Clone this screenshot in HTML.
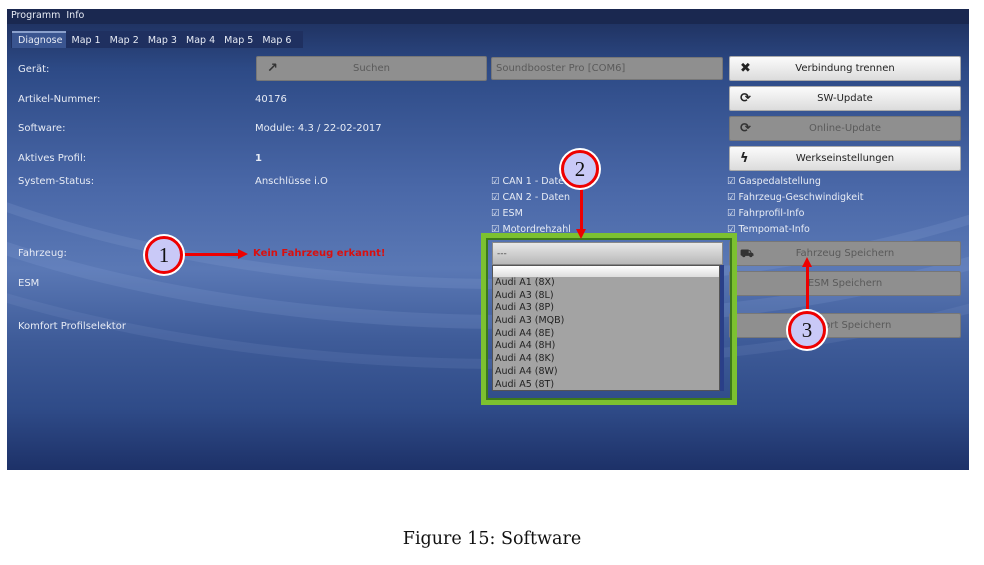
<!DOCTYPE html>
<html><head><meta charset="utf-8"><style>
*{margin:0;padding:0;box-sizing:border-box}
body{width:984px;height:565px;background:#fff;position:relative;font-family:"DejaVu Sans","Liberation Sans",sans-serif;overflow:hidden}
.win{position:absolute;left:7px;top:9px;width:962px;height:461px;background:linear-gradient(#1c2c58 0px,#2d4a86 60px,#4a68a8 180px,#5a78b5 260px,#3f5c99 330px,#2f4b88 400px,#1d3168 461px);overflow:hidden}
.sw{position:absolute;border-radius:50%;border:10px solid rgba(140,165,215,.2)}
.t{position:absolute;color:#e8ecf5;font-size:10px;white-space:nowrap}
.btn{position:absolute;height:25px;border-radius:2px;font-size:10px;color:#222;text-align:center;line-height:24px}
.wb{background:linear-gradient(#fbfbfb,#dcdcdc);border:1px solid #aaa}
.gb{background:#8f8f8f;border:1px solid #777;color:#5a5a5a}
.ic{position:absolute;left:10px;top:0;font-weight:bold;font-size:13px}
.cb{position:absolute;font-size:9.5px;color:#e8ecf5;white-space:nowrap}
.cb:before{content:"☑";margin-right:3px}
.circ{position:absolute;width:38px;height:38px;border-radius:50%;background:#c9c9f7;border:3px solid #e00;box-shadow:0 0 0 2px #fff;font-family:"Liberation Serif",serif;font-size:21px;text-align:center;line-height:32px;color:#111}
.red{position:absolute;background:#e00}
.it{font-size:9.5px;color:#222;height:12.7px;line-height:12.7px;padding-left:2px}
</style></head><body>
<div class="win">
<div class="sw" style="left:-300px;top:-420px;width:1600px;height:700px"></div>
<div class="sw" style="left:-320px;top:-380px;width:1650px;height:700px;border-width:14px;border-color:rgba(150,175,225,.16)"></div>
<div class="sw" style="left:-350px;top:-330px;width:1700px;height:690px;border-color:rgba(140,165,215,.14)"></div>
<div style="position:absolute;left:0;top:0;width:962px;height:15px;background:#1a2850"></div>
<div class="t" style="left:4px;top:1px;font-size:9.5px">Programm&nbsp;&nbsp;Info</div>
<div style="position:absolute;left:4px;top:22px;width:292px;height:17px;background:#1f3060"></div>
<div style="position:absolute;left:5px;top:22px;width:54px;height:17px;background:#3a5590;border-top:2px solid #8aa0cc"></div>
<div class="t" style="left:11px;top:26px;font-size:9.5px">Diagnose&nbsp;&nbsp; Map 1&nbsp;&nbsp; Map 2&nbsp;&nbsp; Map 3&nbsp;&nbsp; Map 4&nbsp;&nbsp; Map 5&nbsp;&nbsp; Map 6</div>
<div class="t" style="left:11px;top:55px">Gerät:</div>
<div class="t" style="left:11px;top:85px">Artikel-Nummer:</div>
<div class="t" style="left:11px;top:114px">Software:</div>
<div class="t" style="left:11px;top:144px">Aktives Profil:</div>
<div class="t" style="left:11px;top:167px">System-Status:</div>
<div class="t" style="left:11px;top:239px">Fahrzeug:</div>
<div class="t" style="left:11px;top:269px">ESM</div>
<div class="t" style="left:11px;top:312px">Komfort Profilselektor</div>
<div class="t" style="left:248px;top:85px">40176</div>
<div class="t" style="left:248px;top:114px">Module: 4.3 / 22-02-2017</div>
<div class="t" style="left:248px;top:144px;font-weight:bold">1</div>
<div class="t" style="left:248px;top:167px">Anschlüsse i.O</div>
<div class="t" style="left:246px;top:239px;color:#d81010;font-weight:bold">Kein Fahrzeug erkannt!</div>
<div class="btn gb" style="left:249px;top:47px;width:231px">Suchen<span class="ic" style="color:#333">↗</span></div>
<div class="btn gb" style="left:484px;top:48px;width:232px;text-align:left;padding-left:4px;height:23px;line-height:21px">Soundbooster Pro [COM6]</div>
<div class="btn wb" style="left:722px;top:47px;width:232px">Verbindung trennen<span class="ic">✖</span></div>
<div class="btn wb" style="left:722px;top:77px;width:232px">SW-Update<span class="ic">⟳</span></div>
<div class="btn gb" style="left:722px;top:107px;width:232px">Online-Update<span class="ic" style="color:#333">⟳</span></div>
<div class="btn wb" style="left:722px;top:137px;width:232px">Werkseinstellungen<span class="ic">ϟ</span></div>
<div class="btn gb" style="left:722px;top:232px;width:232px">Fahrzeug Speichern<span class="ic" style="color:#333;font-size:11px">⛟</span></div>
<div class="btn gb" style="left:722px;top:262px;width:232px">ESM Speichern</div>
<div class="btn gb" style="left:722px;top:304px;width:232px">Komfort Speichern</div>
<div class="cb" style="left:484px;top:167px">CAN 1 - Daten</div>
<div class="cb" style="left:484px;top:183px">CAN 2 - Daten</div>
<div class="cb" style="left:484px;top:199px">ESM</div>
<div class="cb" style="left:484px;top:215px">Motordrehzahl</div>
<div class="cb" style="left:720px;top:167px">Gaspedalstellung</div>
<div class="cb" style="left:720px;top:183px">Fahrzeug-Geschwindigkeit</div>
<div class="cb" style="left:720px;top:199px">Fahrprofil-Info</div>
<div class="cb" style="left:720px;top:215px">Tempomat-Info</div>
<div style="position:absolute;left:474px;top:224px;width:256px;height:172px;border:5px solid #7cc130;box-shadow:inset 0 0 0 2px #3d7a1a"></div>
<div style="position:absolute;left:485px;top:233px;width:231px;height:23px;background:linear-gradient(#e8e8e8,#b8b8b8);border:1px solid #888;font-size:9px;color:#444;padding:6px 4px">---</div>
<div style="position:absolute;left:485px;top:256px;width:228px;height:126px;background:#a3a3a3;border:1px solid #555">
<div style="height:11px;background:linear-gradient(#fff,#ddd)"></div>
<div class="it">Audi A1 (8X)</div><div class="it">Audi A3 (8L)</div><div class="it">Audi A3 (8P)</div><div class="it">Audi A3 (MQB)</div><div class="it">Audi A4 (8E)</div><div class="it">Audi A4 (8H)</div><div class="it">Audi A4 (8K)</div><div class="it">Audi A4 (8W)</div><div class="it">Audi A5 (8T)</div>
</div>
<div style="position:absolute;left:713px;top:256px;width:4px;height:126px;background:#2a3f88"></div>
</div>
<div class="red" style="left:183px;top:253px;width:56px;height:3px"></div>
<div style="position:absolute;left:238px;top:249px;border-left:10px solid #e00;border-top:5px solid transparent;border-bottom:5px solid transparent"></div>
<div class="red" style="left:580px;top:186px;width:3px;height:44px"></div>
<div style="position:absolute;left:576px;top:229px;border-top:10px solid #e00;border-left:5px solid transparent;border-right:5px solid transparent"></div>
<div class="red" style="left:806px;top:264px;width:3px;height:50px"></div>
<div style="position:absolute;left:802px;top:257px;border-bottom:10px solid #e00;border-left:5px solid transparent;border-right:5px solid transparent"></div>
<div class="circ" style="left:145px;top:236px">1</div>
<div class="circ" style="left:561px;top:150px">2</div>
<div class="circ" style="left:788px;top:311px">3</div>
<div style="position:absolute;left:0;width:984px;top:529px;text-align:center;font-family:'DejaVu Serif','Liberation Serif',serif;font-size:17.5px;color:#111">Figure 15: Software</div>
</body></html>
